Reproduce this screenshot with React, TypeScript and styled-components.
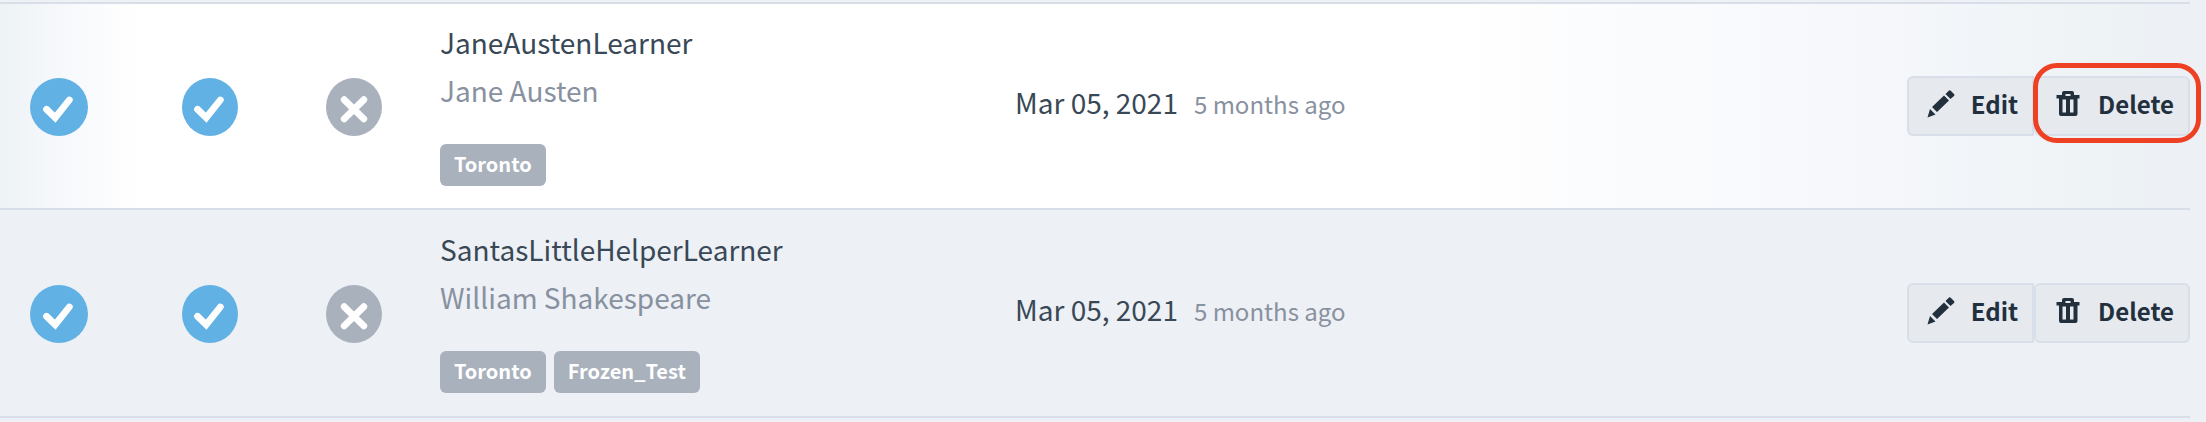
import React from "react";
import styled, { createGlobalStyle } from "styled-components";

const GlobalStyle = createGlobalStyle`
  *, *::before, *::after { box-sizing: border-box; }
  body {
    margin: 0;
    background: #edf0f5;
    color: #394856;
    font-family: "Noto Sans CJK SC", "Noto Sans", sans-serif;
    font-size: 28px;
    line-height: 40px;
  }
`;

const Page = styled.main`
  padding: 2px 16px 4px 0;
  overflow: hidden;
`;

const Table = styled.table`
  width: 100%;
  border-collapse: separate;
  border-spacing: 0;
  table-layout: fixed;
  border-top: 2px solid #d8dfe8;
`;

const Cell = styled.td<{ $pad?: string }>`
  height: 206px;
  padding: ${(p) => p.$pad ?? "0"};
  border-bottom: 2px solid #d8dfe8;
  vertical-align: middle;
`;

const Row = styled.tr<{ $hovered?: boolean }>`
  background: ${(p) =>
    p.$hovered
      ? "linear-gradient(to right, #edf2f5 0, #f5f7fb 50px, #ffffff 140px, #ffffff 66%, #f5f7fb 86%, #edf2f5 97%, #edf0f5 100%)"
      : "transparent"};

  &:last-child ${Cell} {
    height: 208px;
  }
`;

const StatusIcon = styled.svg`
  display: block;
  height: 58px;
`;

const Username = styled.div`
  color: #394856;
  line-height: 48px;
`;

const FullName = styled.div`
  color: #88919f;
  line-height: 48px;
`;

const Tags = styled.div`
  display: flex;
  gap: 8px;
  margin-top: 30px;
`;

const Tag = styled.span`
  height: 42px;
  padding: 0 14px;
  border-radius: 6px;
  background: #a9b1bd;
  color: #fff;
  font-size: 20px;
  font-weight: 700;
  line-height: 40px;
`;

const When = styled.div`
  display: flex;
  align-items: baseline;
  gap: 16px;
  white-space: nowrap;
`;

const Ago = styled.span`
  color: #88919f;
  font-size: 24px;
`;

const Actions = styled.div`
  display: flex;
  justify-content: flex-end;
`;

const ActionButton = styled.button<{ $side: "left" | "right"; $marked?: boolean }>`
  position: relative;
  display: flex;
  align-items: center;
  height: 60px;
  padding: 0 14px 4px 18px;
  border: 2px solid #d8dfe8;
  border-radius: ${(p) => (p.$side === "left" ? "6px 0 0 6px" : "6px")};
  background: #e6e9ee;
  color: #22303e;
  font: inherit;
  font-size: 24px;
  font-weight: 700;
  line-height: 40px;
  cursor: pointer;

  &::after {
    content: "";
    display: ${(p) => (p.$marked ? "block" : "none")};
    position: absolute;
    inset: -15px -13px -9px -3px;
    border: 5px solid #ee4023;
    border-radius: 24px;
  }
`;

const ButtonIcon = styled.svg`
  width: 28px;
  height: 28px;
  margin-right: 16px;
  fill: currentColor;
`;

const Yes = ({ narrow }: { narrow?: boolean }) => (
  <StatusIcon viewBox={narrow ? "1 0 56 58" : "0 0 58 58"} role="img" aria-label="Yes">
    <ellipse cx="29" cy="29" rx={narrow ? 28 : 29} ry="29" fill="#62b1e4" />
    <path
      d="M16.500 31.300 25.200 39.700 39.300 22"
      fill="none"
      stroke="#fff"
      strokeWidth="6.800"
      strokeLinecap="round"
      strokeLinejoin="miter"
    />
  </StatusIcon>
);

const No = () => (
  <StatusIcon viewBox="1 0 56 58" role="img" aria-label="No">
    <ellipse cx="29" cy="29" rx="28" ry="29" fill="#a9b1bd" />
    <path d="M19.200 21.700 38.800 40.900M38.800 21.700 19.200 40.900" stroke="#fff" strokeWidth="6.800" strokeLinecap="round" />
  </StatusIcon>
);

const Pencil = () => (
  <ButtonIcon viewBox="0 0 28 28" aria-hidden="true">
    <path d="M0.500 27.500 3 19 8.500 24.500ZM5 17 17 5.500 22 10.500 10 22ZM18.500 4 22 0.500Q23 0 24 1L27 4Q28 5 27 6L23.500 9Z" />
  </ButtonIcon>
);

const Trash = () => (
  <ButtonIcon viewBox="0 0 28 28" aria-hidden="true">
    <path
      fillRule="evenodd"
      d="M2.500 5H8V3Q8 1 10 1H18Q20 1 20 3V5H25.500V8.500H23.500V24Q23.500 26 21.500 26H7Q5 26 5 24V8.500H2.500ZM11.500 4V6H16.500V4ZM8.500 9.500V22.500H12V9.500ZM16 9.500V22.500H19.500V9.500Z"
    />
  </ButtonIcon>
);

type Learner = {
  username: string;
  name: string;
  tags: string[];
  date: string;
  ago: string;
  hovered?: boolean;
};

const learners: Learner[] = [
  { username: "JaneAustenLearner", name: "Jane Austen", tags: ["Toronto"], date: "Mar 05, 2021", ago: "5 months ago", hovered: true },
  { username: "SantasLittleHelperLearner", name: "William Shakespeare", tags: ["Toronto", "Frozen_Test"], date: "Mar 05, 2021", ago: "5 months ago" },
];

const Column = styled.col<{ $width?: number }>`
  width: ${(p) => (p.$width ? `${p.$width}px` : "auto")};
`;

export default function App() {
  return (
    <>
      <GlobalStyle />
      <Page>
        <Table>
          <colgroup>
            <Column $width={182} />
            <Column $width={144} />
            <Column $width={114} />
            <Column $width={575} />
            <Column />
            <Column $width={400} />
          </colgroup>
          <tbody>
            {learners.map((l) => (
              <Row key={l.username} $hovered={l.hovered}>
                <Cell $pad="2px 0 0 30px"><Yes /></Cell>
                <Cell $pad="2px 0 0"><Yes narrow /></Cell>
                <Cell $pad="2px 0 0"><No /></Cell>
                <Cell $pad="0 0 8px">
                  <Username>{l.username}</Username>
                  <FullName>{l.name}</FullName>
                  <Tags>
                    {l.tags.map((t) => <Tag key={t}>{t}</Tag>)}
                  </Tags>
                </Cell>
                <Cell $pad="0 0 6px">
                  <When>
                    <span>{l.date}</span>
                    <Ago>{l.ago}</Ago>
                  </When>
                </Cell>
                <Cell>
                  <Actions>
                    <ActionButton type="button" $side="left"><Pencil />Edit</ActionButton>
                    <ActionButton type="button" $side="right" $marked={l.hovered}><Trash />Delete</ActionButton>
                  </Actions>
                </Cell>
              </Row>
            ))}
          </tbody>
        </Table>
      </Page>
    </>
  );
}
